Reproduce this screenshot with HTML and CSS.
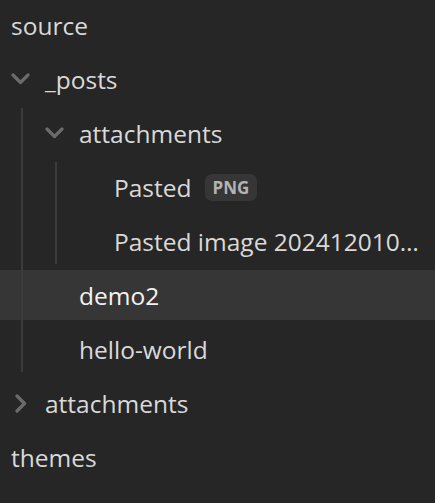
FILE: index.html
```html
<!DOCTYPE html>
<html>
<head>
<meta charset="utf-8">
<link rel="stylesheet" href="styles.css">
</head>
<body>
<div class="tree">
  <div class="row lvl0"><span class="name">source</span></div>
  <div class="row lvl0">
    <span class="chev"><svg width="19" height="13" viewBox="0 0 19 13"><path d="M2 2 L9.5 9.5 L17 2" /></svg></span>
    <span class="name">_posts</span>
  </div>
  <div class="children g1">
    <div class="row lvl1">
      <span class="chev"><svg width="19" height="13" viewBox="0 0 19 13"><path d="M2 2 L9.5 9.5 L17 2" /></svg></span>
      <span class="name">attachments</span>
    </div>
    <div class="children g2">
      <div class="row lvl3"><span class="name">Pasted</span><span class="badge">PNG</span></div>
      <div class="row lvl3"><span class="name">Pasted image 202412010…</span></div>
    </div>
    <div class="row lvl2 active"><span class="name">demo2</span></div>
    <div class="row lvl2"><span class="name">hello-world</span></div>
  </div>
  <div class="row lvl0">
    <span class="chev right"><svg width="12" height="19" viewBox="0 0 12 19"><path d="M2 2 L9.5 9.5 L2 17" /></svg></span>
    <span class="name">attachments</span>
  </div>
  <div class="row lvl0"><span class="name">themes</span></div>
</div>
</body>
</html>
```
FILE: styles.css
```css
html, body {
  margin: 0;
  padding: 0;
  background: #262626;
  width: 435px;
  height: 503px;
  overflow: hidden;
}
.tree {
  display: flex;
  flex-direction: column;
  gap: 4px;
  font-family: "Open Sans", "Noto Sans", sans-serif;
  font-size: 24.5px;
  color: #d9d9d9;
}
.children {
  display: flex;
  flex-direction: column;
  gap: 4px;
  position: relative;
}
.children::before {
  content: "";
  position: absolute;
  top: 0;
  bottom: 2px;
  width: 2px;
  background: #3c3c3c;
  z-index: 1;
}
.g1::before { left: 21px; }
.g2::before { left: 55px; }
.row {
  height: 50px;
  display: flex;
  align-items: center;
  box-sizing: border-box;
  padding-right: 12px;
  white-space: nowrap;
}
.lvl0 { padding-left: 11px; }
.lvl1 { padding-left: 45px; }
.lvl2 { padding-left: 79px; }
.lvl3 { padding-left: 114px; }
.chev {
  width: 34px;
  display: flex;
  align-items: center;
  padding-left: 0;
  box-sizing: border-box;
}
.chev.right { padding-left: 4px; }
.chev svg path {
  fill: none;
  stroke: #6b6b6b;
  stroke-width: 3.2;
  stroke-linecap: round;
  stroke-linejoin: round;
}
.active {
  background: #363636;
  color: #f2f2f2;
}
.badge {
  margin-left: 13px;
  height: 27px;
  padding: 0 8px;
  display: flex;
  align-items: center;
  background: #363636;
  border-radius: 7px;
  font-size: 17px;
  font-weight: 700;
  color: #b3b3b3;
}
```
